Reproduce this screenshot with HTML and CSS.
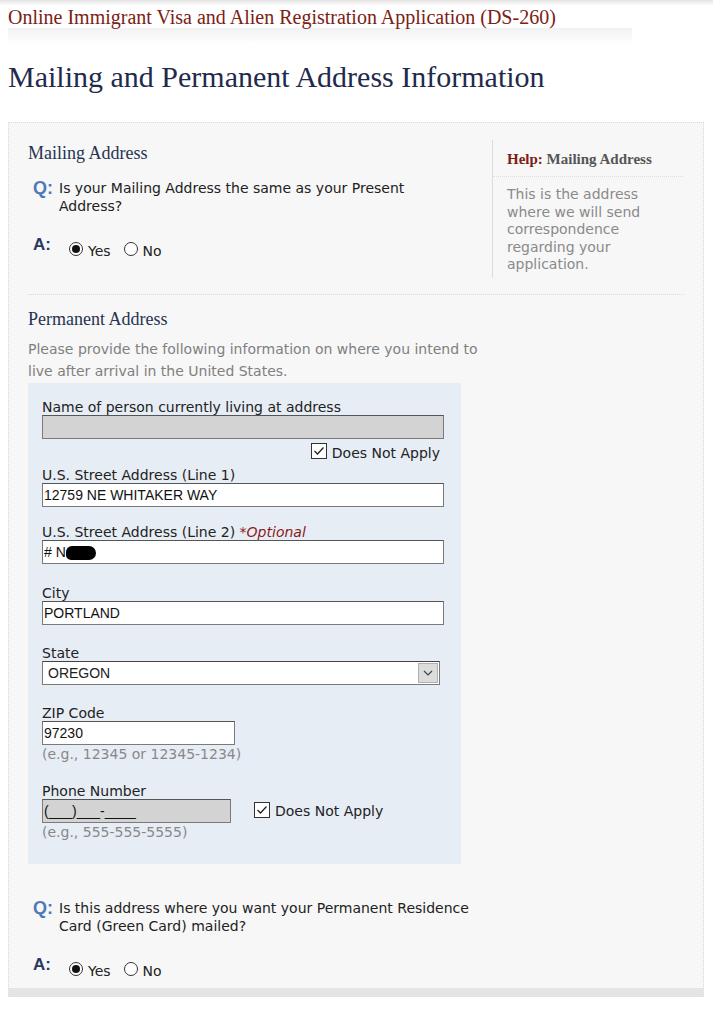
FILE: index.html
```html
<!DOCTYPE html>
<html lang="en">
<head>
<meta charset="utf-8">
<title>DS-260 Mailing and Permanent Address Information</title>
<link rel="stylesheet" href="styles.css">
</head>
<body>
<div class="topshade"></div>
<div class="app-title">Online Immigrant Visa and Alien Registration Application (DS-260)</div>
<div class="app-band"></div>
<h1 class="page-title">Mailing and Permanent Address Information</h1>

<div class="panel">
  <div class="mailing">
    <div class="mailing-main">
      <h2 class="sec-title">Mailing Address</h2>
      <div class="qa q">
        <span class="qa-mark q-mark">Q:</span>
        <span class="qa-text">Is your Mailing Address the same as your Present Address?</span>
      </div>
      <div class="qa a">
        <span class="qa-mark a-mark">A:</span>
        <span class="radios">
          <span class="radio on"></span><span class="radio-label">Yes</span>
          <span class="radio"></span><span class="radio-label">No</span>
        </span>
      </div>
    </div>
    <div class="help">
      <div class="help-title"><span class="help-key">Help:</span> Mailing Address</div>
      <div class="help-text">This is the address where we will send correspondence regarding your application.</div>
    </div>
  </div>

  <div class="divider"></div>

  <h2 class="sec-title">Permanent Address</h2>
  <p class="intro">Please provide the following information on where you intend to live after arrival in the United States.</p>

  <div class="addr-box">
    <div class="field name-field">
      <div class="label">Name of person currently living at address</div>
      <div class="input wide disabled"></div>
      <div class="dna right"><span class="check"><svg viewBox="0 0 16 16" width="16" height="16"><path d="M3.5 8 L6.5 11 L12.5 4.5" fill="none" stroke="#222" stroke-width="1.3"/></svg></span>Does Not Apply</div>
    </div>
    <div class="field tight">
      <div class="label">U.S. Street Address (Line 1)</div>
      <div class="input wide">12759 NE WHITAKER WAY</div>
    </div>
    <div class="field loose">
      <div class="label">U.S. Street Address (Line 2) <span class="optional">*Optional</span></div>
      <div class="input wide"># N<span class="redact"></span></div>
    </div>
    <div class="field">
      <div class="label">City</div>
      <div class="input wide">PORTLAND</div>
    </div>
    <div class="field">
      <div class="label">State</div>
      <div class="select"><span class="select-val">OREGON</span><span class="select-btn"><svg viewBox="0 0 10 6" width="10" height="6"><path d="M1 1 L5 5 L9 1" fill="none" stroke="#444" stroke-width="1.2"/></svg></span></div>
    </div>
    <div class="field">
      <div class="label">ZIP Code</div>
      <div class="input zip">97230</div>
      <div class="hint">(e.g., 12345 or 12345-1234)</div>
    </div>
    <div class="field">
      <div class="label">Phone Number</div>
      <div class="phone-row">
        <div class="input phone disabled">(___)___-____</div>
        <div class="dna"><span class="check"><svg viewBox="0 0 16 16" width="16" height="16"><path d="M3.5 8 L6.5 11 L12.5 4.5" fill="none" stroke="#222" stroke-width="1.3"/></svg></span>Does Not Apply</div>
      </div>
      <div class="hint">(e.g., 555-555-5555)</div>
    </div>
  </div>

  <div class="qa q q2">
    <span class="qa-mark q-mark">Q:</span>
    <span class="qa-text">Is this address where you want your Permanent Residence Card (Green Card) mailed?</span>
  </div>
  <div class="qa a">
    <span class="qa-mark a-mark">A:</span>
    <span class="radios">
      <span class="radio on"></span><span class="radio-label">Yes</span>
      <span class="radio"></span><span class="radio-label">No</span>
    </span>
  </div>
</div>
</body>
</html>
```

FILE: styles.css
```css
html, body {
  margin: 0;
  padding: 0;
  background: #fff;
}
body {
  font-family: "DejaVu Sans", Verdana, sans-serif;
  font-size: 14px;
  color: #222;
}
.topshade {
  height: 6px;
  background: linear-gradient(#e4e4e4, #ffffff);
}
.app-title {
  margin-left: 8px;
  font-family: "Liberation Serif", "Times New Roman", serif;
  font-size: 20px;
  line-height: 22px;
  color: #7b2115;
}
.app-band {
  margin-left: 8px;
  width: 624px;
  height: 16px;
  background: linear-gradient(#f2f2f2, #ffffff);
}
.page-title {
  margin: 15px 0 0 8px;
  font-family: "Liberation Serif", "Times New Roman", serif;
  font-weight: normal;
  font-size: 30px;
  line-height: 36px;
  color: #1f2a4d;
}
.panel {
  margin: 27px 0 0 8px;
  width: 656px;
  padding: 18px 19px 9px 19px;
  background: #f7f7f7;
  border: 1px dotted #d8d8d8;
  border-bottom: 9px solid #e4e4e4;
}
.mailing {
  display: flex;
}
.mailing-main {
  width: 464px;
}
.sec-title {
  margin: 0;
  font-family: "Liberation Serif", "Times New Roman", serif;
  font-weight: normal;
  font-size: 18px;
  line-height: 24px;
  color: #263352;
}
.qa {
  display: flex;
  align-items: flex-start;
  padding-left: 5px;
}
.qa.q {
  margin-top: 14px;
}
.qa.a {
  margin-top: 21px;
}
.qa-mark {
  font-family: "Liberation Sans", Arial, sans-serif;
  font-weight: bold;
  width: 26px;
  flex: none;
}
.q-mark {
  font-size: 18px;
  line-height: 18px;
  color: #4d7bb5;
}
.a-mark {
  font-size: 17px;
  line-height: 18px;
  color: #2b3a5c;
}
.qa-text {
  line-height: 18px;
  width: 360px;
}
.radios {
  display: flex;
  align-items: center;
  padding-left: 10px;
  margin-top: 3px;
}
.radio {
  width: 14px;
  height: 14px;
  border: 1px solid #333;
  border-radius: 50%;
  background: #fff;
  position: relative;
  box-sizing: border-box;
  flex: none;
}
.radio.on::after {
  content: "";
  position: absolute;
  left: 2px;
  top: 2px;
  width: 8px;
  height: 8px;
  border-radius: 50%;
  background: #111;
}
.radio-label {
  margin: 4px 13px 0 5px;
  line-height: 16px;
}
.help {
  margin-top: -1px;
  width: 190px;
  border-left: 1px solid #dcdcdc;
  padding-bottom: 4px;
}
.help-title {
  font-family: "Liberation Serif", "Times New Roman", serif;
  font-weight: bold;
  font-size: 15px;
  line-height: 18px;
  color: #555;
  padding: 10px 0 8px 14px;
  border-bottom: 1px dotted #dedede;
}
.help-key {
  color: #7b2115;
}
.help-text {
  padding: 9px 0 0 14px;
  width: 150px;
  line-height: 17.5px;
  color: #8a8a8a;
}
.divider {
  margin: 16px 0 12px 0;
  border-top: 1px dotted #dcdcdc;
}
.intro {
  margin: 7px 0 0 0;
  width: 460px;
  line-height: 22px;
  color: #808080;
}
.addr-box {
  margin-top: 1px;
  width: 405px;
  padding: 16px 14px 23px 14px;
  background: #e7edf5;
}
.field {
  margin-bottom: 20px;
}
.field.name-field {
  margin-bottom: 6px;
}
.field.tight {
  margin-bottom: 17px;
}
.field.loose {
  margin-bottom: 21px;
}
.label {
  line-height: 16px;
  color: #222;
}
.optional {
  font-style: italic;
  color: #8b1a1a;
}
.input {
  box-sizing: border-box;
  height: 24px;
  border: 1px solid #7a7a7a;
  border-top-color: #555;
  background: #fff;
  font-family: "Liberation Sans", Arial, sans-serif;
  font-size: 14px;
  line-height: 22px;
  padding-left: 1px;
  color: #111;
  white-space: nowrap;
}
.input.wide {
  width: 402px;
}
.input.disabled {
  background: #d3d3d3;
}
.input.zip {
  width: 193px;
}
.input.phone {
  width: 189px;
}
.redact {
  display: inline-block;
  width: 30px;
  height: 14px;
  background: #000;
  border-radius: 6px 7px 7px 5px;
  vertical-align: -3px;
}
.dna {
  display: flex;
  align-items: center;
  line-height: 16px;
}
.dna.right {
  justify-content: flex-end;
  margin-top: 6px;
  margin-right: 7px;
}
.check {
  display: inline-block;
  width: 16px;
  height: 16px;
  box-sizing: border-box;
  border: 1px solid #333;
  background: #fff;
  margin-right: 5px;
  line-height: 0;
  position: relative;
  top: -2px;
  flex: none;
}
.check svg {
  position: absolute;
  left: -1px;
  top: -1px;
}
.select {
  box-sizing: border-box;
  width: 398px;
  height: 24px;
  border: 1px solid #7a7a7a;
  border-top-color: #444;
  background: #fff;
  display: flex;
  justify-content: space-between;
  font-family: "Liberation Sans", Arial, sans-serif;
  font-size: 14px;
}
.select-val {
  padding-left: 5px;
  line-height: 22px;
}
.select-btn {
  width: 20px;
  margin: 1px;
  background: #dcdcdc;
  border: 1px solid #b0b0b0;
  box-sizing: border-box;
  display: flex;
  align-items: center;
  justify-content: center;
}
.hint {
  line-height: 17px;
  color: #888;
  margin-top: 1px;
}
.phone-row {
  display: flex;
  align-items: center;
}
.phone-row .dna {
  margin-left: 23px;
}
.phone-row .check {
  top: -1px;
}
.addr-box .field:last-child {
  margin-bottom: 0;
}
.qa.q2 {
  margin-top: 35px;
}
.q2 .qa-text {
  width: 425px;
}
```
